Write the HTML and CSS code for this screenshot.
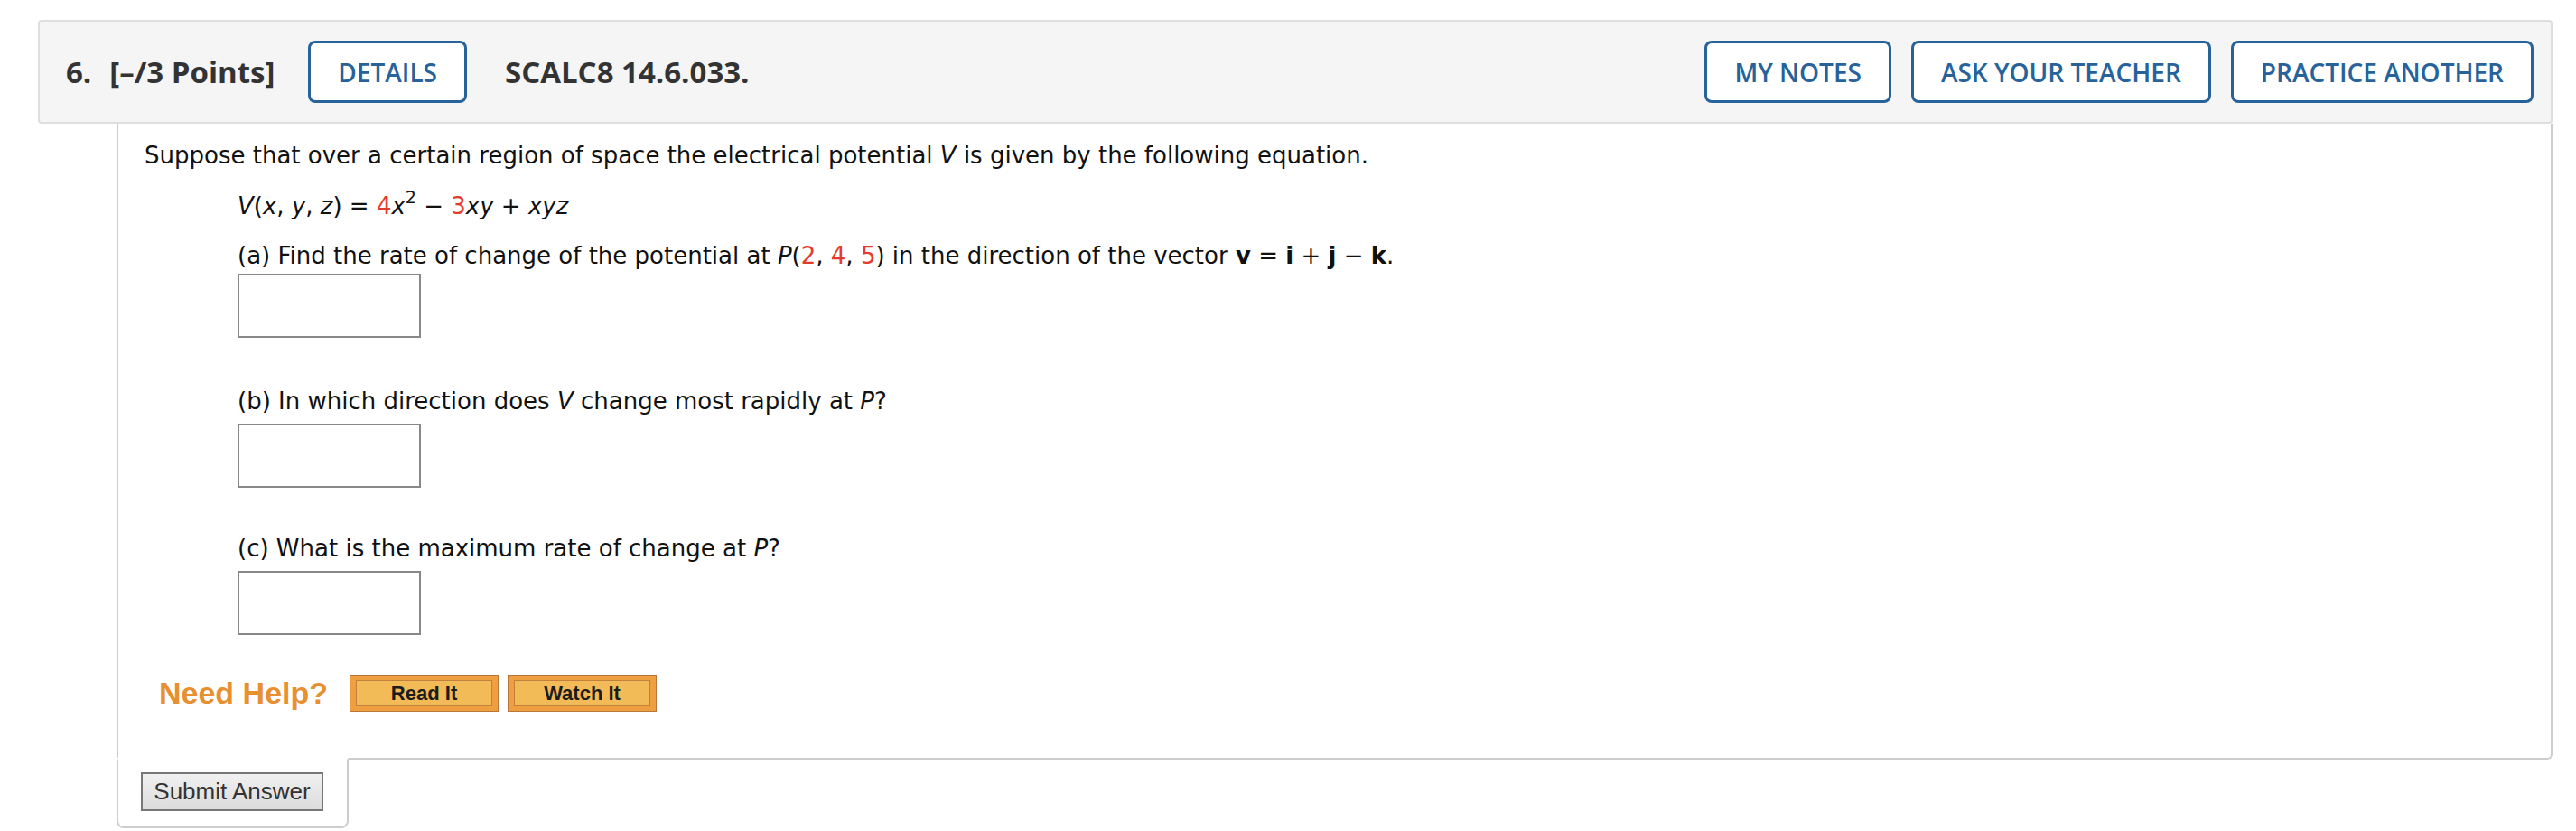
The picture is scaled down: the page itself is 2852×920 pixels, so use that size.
FILE: index.html
```html
<!DOCTYPE html>
<html>
<head>
<meta charset="utf-8">
<link rel="stylesheet" href="styles.css">
</head>
<body>
<div class="question">
  <div class="qhead">
    <span class="qnum">6.</span>
    <span class="qpts">[–/3 Points]</span>
    <span class="obtn details">DETAILS</span>
    <span class="qid">SCALC8 14.6.033.</span>
    <span class="spacer"></span>
    <span class="obtn">MY NOTES</span>
    <span class="obtn">ASK YOUR TEACHER</span>
    <span class="obtn">PRACTICE ANOTHER</span>
  </div>
  <div class="qbody">
    <p class="intro">Suppose that over a certain region of space the electrical potential <i>V</i> is given by the following equation.</p>
    <div class="indent">
      <p class="eq"><i>V</i>(<i>x</i>, <i>y</i>, <i>z</i>) = <span class="red">4</span><i>x</i><sup>2</sup> − <span class="red">3</span><i>xy</i> + <i>xyz</i></p>
      <p class="part pa">(a) Find the rate of change of the potential at <i>P</i>(<span class="red">2</span>, <span class="red">4</span>, <span class="red">5</span>) in the direction of the vector <b>v</b> = <b>i</b> + <b>j</b> − <b>k</b>.</p>
      <div class="ans first"></div>
      <p class="part pb">(b) In which direction does <i>V</i> change most rapidly at <i>P</i>?</p>
      <div class="ans"></div>
      <p class="part">(c) What is the maximum rate of change at <i>P</i>?</p>
      <div class="ans"></div>
    </div>
    <div class="help">
      <span class="needhelp">Need Help?</span>
      <span class="hbtn"><span class="hin">Read It</span></span>
      <span class="hbtn"><span class="hin">Watch It</span></span>
    </div>
  </div>
  <div class="tab">
    <span class="submit">Submit Answer</span>
  </div>
</div>
</body>
</html>
```

FILE: styles.css
```css
html, body {
  margin: 0;
  padding: 0;
  background: #fff;
}
.question {
  padding: 22px 26px 0 42px;
}
.qhead {
  display: flex;
  align-items: center;
  height: 111px;
  background: #f5f5f5;
  border: 2px solid #dedede;
  border-radius: 4px;
  padding: 0 19px 0 29px;
  font-family: "Open Sans", sans-serif;
  color: #333;
}
.qnum, .qpts, .qid {
  font-weight: 700;
  font-size: 33px;
}
.qpts { margin-left: 20px; }
.spacer { flex: 1; }
.obtn {
  display: flex;
  align-items: center;
  justify-content: center;
  box-sizing: border-box;
  height: 69px;
  padding: 0 30px;
  border: 3px solid #27639a;
  border-radius: 8px;
  color: #27639a;
  font-size: 28px;
  font-weight: 600;
  background: #fff;
  margin-left: 22px;
}
.obtn.details { margin-left: 37px; margin-right: 42px; }
.qbody {
  margin-left: 87px;
  border-left: 2px solid #cdcdcd;
  border-right: 2px solid #cdcdcd;
  border-bottom: 2px solid #cdcdcd;
  border-bottom-right-radius: 6px;
  padding: 19px 0 51px 29px;
  font-family: "DejaVu Sans", Verdana, sans-serif;
  font-size: 26px;
  color: #111;
}
.qbody p {
  margin: 0;
  line-height: 32px;
}
.indent {
  padding-left: 103px;
}
.eq { margin-top: 24px !important; }
.part { margin-top: 51px !important; }
.pa { margin-top: 23px !important; }
.pb { margin-top: 54px !important; }
.red { color: #e53b2c; }
sup {
  font-size: 19px;
  line-height: 0;
  vertical-align: 12px;
}
.ans {
  width: 199px;
  height: 67px;
  border: 2px solid #888;
  margin-top: 9px;
}
.ans.first { margin-top: 4px; }
.help {
  display: flex;
  align-items: center;
  gap: 10px;
  margin-top: 44px;
  padding-left: 16px;
}
.needhelp {
  font-family: "Liberation Sans", Arial, sans-serif;
  font-weight: 700;
  font-size: 34px;
  color: #e8902f;
  margin-right: 14px;
}
.hbtn {
  display: block;
  box-sizing: border-box;
  width: 165px;
  height: 41px;
  padding: 5px 6px;
  background: #ef9f3f;
  border: 1px solid #b8773a;
}
.hin {
  display: flex;
  align-items: center;
  justify-content: center;
  box-sizing: border-box;
  height: 100%;
  background: #f2bb58;
  border: 1px solid #c1803d;
  font-family: "Liberation Sans", Arial, sans-serif;
  font-weight: 700;
  font-size: 22px;
  color: #1c1c1c;
}
.tab {
  margin-left: 87px;
  margin-top: -2px;
  width: 228px;
  height: 60px;
  border-left: 2px solid #cdcdcd;
  border-right: 2px solid #cdcdcd;
  border-bottom: 2px solid #cdcdcd;
  border-top: 2px solid #fff;
  border-radius: 0 0 8px 8px;
  padding: 14px 0 0 25px;
}
.submit {
  display: inline-block;
  box-sizing: border-box;
  width: 202px;
  height: 43px;
  line-height: 39px;
  text-align: center;
  border: 2px solid #777;
  background: linear-gradient(#f0f0f0, #dcdcdc);
  font-family: "Liberation Sans", Arial, sans-serif;
  font-size: 26px;
  color: #333;
}
```
